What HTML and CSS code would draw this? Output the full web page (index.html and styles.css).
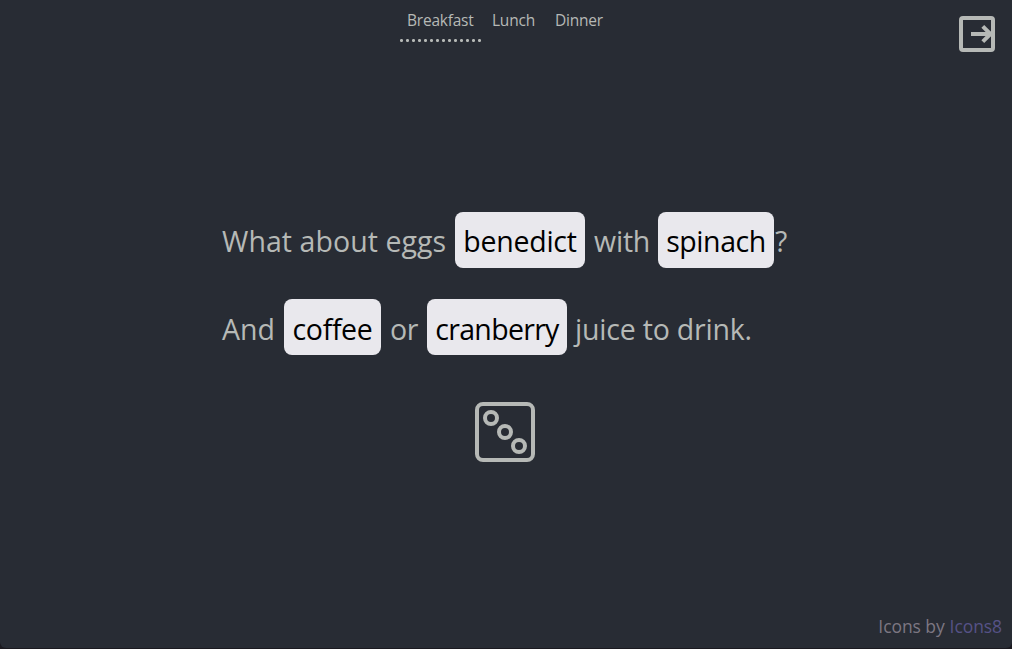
FILE: index.html
```html
<!DOCTYPE html>
<html lang="en">
<head>
<meta charset="utf-8">
<title>Meal ideas</title>
<link rel="stylesheet" href="styles.css">
</head>
<body>
<div class="app">
<header class="header">
  <nav class="tabs">
    <a class="tab tab-active">Breakfast</a>
    <a class="tab tab-lunch">Lunch</a>
    <a class="tab">Dinner</a>
  </nav>
  <button class="exit" aria-label="Exit">
    <svg width="36" height="36" viewBox="0 0 36 36" fill="none" stroke="currentColor" stroke-width="4">
      <rect x="2" y="2" width="32" height="32" rx="2"/>
      <path d="M12 18H32M23.800 10.300L31.500 18L23.800 25.700"/>
    </svg>
  </button>
</header>
<main class="suggestion">
  <p class="line line-meal"><span class="text eggs">What about eggs</span><span class="choice benedict">benedict</span><span class="text with">with</span><span class="choice spinach">spinach</span><span class="text mark">?</span></p>
  <p class="line line-drink"><span class="text and">And</span><span class="choice coffee">coffee</span><span class="text or">or</span><span class="choice cranberry">cranberry</span><span class="text juice">juice to drink.</span></p>
  <button class="dice" aria-label="Roll again">
    <svg width="60" height="60" viewBox="0 0 60 60" fill="none" stroke="currentColor" stroke-width="4">
      <rect x="2" y="2" width="56" height="56" rx="6"/>
      <circle cx="16" cy="16" r="6"/>
      <circle cx="30" cy="30" r="6"/>
      <circle cx="44" cy="44" r="6"/>
    </svg>
  </button>
</main>
<footer class="credit"><span>Icons by</span> <a class="credit-link">Icons8</a></footer>
</div>
</body>
</html>
```
FILE: styles.css
```css
* { box-sizing: border-box; }
html { background: #1b1a20; }
body {
  margin: 0;
  color: #b6b9b6;
  font-family: "Segoe UI", "Open Sans", sans-serif;
}
.app {
  height: 648px;
  overflow: hidden;
  display: flex;
  flex-direction: column;
  background: #282c34;
  border-radius: 0 0 6px 6px;
}
button { padding: 0; border: 0; background: none; color: inherit; display: block; }
svg { display: block; }
.header {
  height: 212px;
  display: flex;
  justify-content: space-between;
  align-items: flex-start;
  padding: 0 17px 0 399px;
}
.tabs {
  display: flex;
  padding-top: 10px;
  font-size: 15.500px;
  letter-spacing: -0.220px;
  line-height: 20px;
  white-space: nowrap;
}
.tab { height: 33px; }
.tab-active {
  width: 82px;
  padding-left: 8px;
  margin-right: 11px;
  background: radial-gradient(circle at 1.500px 1.500px, currentColor 1.200px, transparent 1.800px) 1px 29px / 6px 3px repeat-x;
}
.tab-lunch { width: 63px; }
.exit { margin-top: 16px; }
.suggestion { flex: 1; display: flex; flex-direction: column; padding-left: 222px; }
.line {
  display: flex;
  margin: 0 0 31px;
  height: 56px;
  line-height: 59px;
  font-size: 28.500px;
  white-space: nowrap;
}
.line-drink { margin-bottom: 47px; line-height: 60px; }
.choice { background: #e9e8ed; color: #000; border-radius: 8px; text-align: center; }
.eggs { width: 233px; letter-spacing: 0.070px; }
.benedict { width: 130px; letter-spacing: -0.250px; }
.with { width: 73px; padding-left: 9px; letter-spacing: -0.200px; }
.spinach { width: 116px; letter-spacing: -0.450px; }
.mark { padding-left: 1px; }
.and { width: 62px; }
.coffee { width: 97px; letter-spacing: -0.350px; }
.or { width: 46px; padding-left: 9px; letter-spacing: -0.500px; }
.cranberry { width: 140px; letter-spacing: -0.700px; }
.juice { padding-left: 8px; letter-spacing: -0.200px; }
.dice { width: 60px; margin-left: 253px; }
.credit {
  display: flex;
  justify-content: flex-end;
  gap: 5px;
  height: 33px;
  padding-right: 10px;
  font-size: 17.500px;
  letter-spacing: -0.080px;
  line-height: 23px;
  color: #7d7782;
}
.credit-link { color: #565286; }
```
